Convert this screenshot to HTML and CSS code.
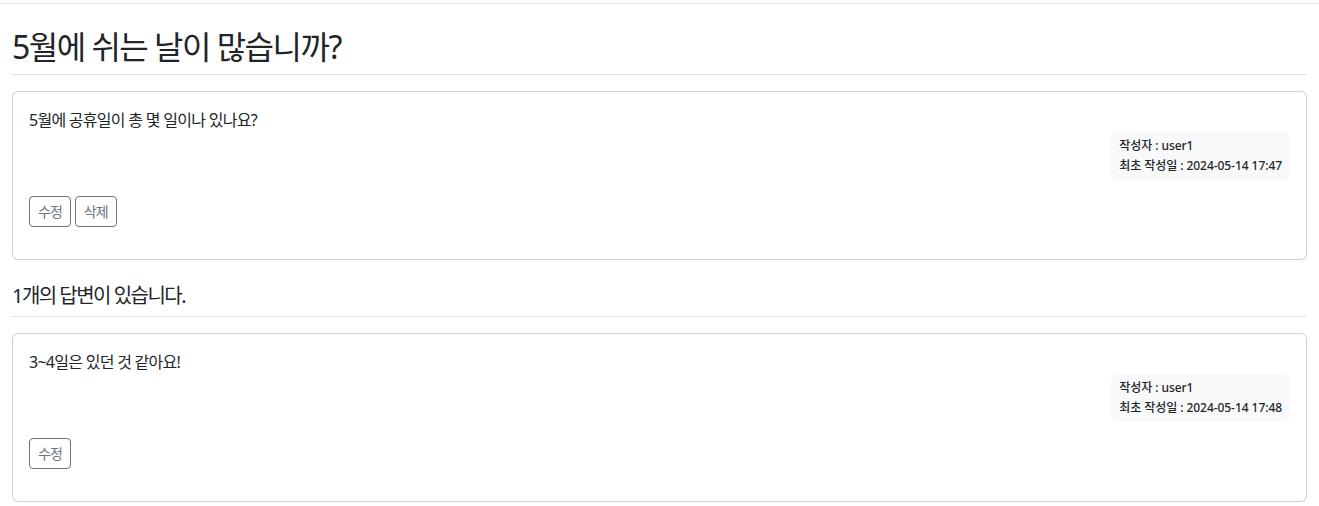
FILE: index.html
```html
<!DOCTYPE html>
<html lang="ko">
<head>
<meta charset="utf-8">
<title>5월에 쉬는 날이 많습니까?</title>
<link rel="stylesheet" href="styles.css">
</head>
<body>
<div class="topline"></div>
<div class="container">
  <h2 class="title">5월에 쉬는 날이 많습니까?</h2>
  <div class="card">
    <div class="card-body">
      <div class="card-text">5월에 공휴일이 총 몇 일이나 있나요?</div>
      <div class="meta-row">
        <div class="badge">
          <div class="badge-line">작성자 : user1</div>
          <div>최초 작성일 : 2024-05-14 17:47</div>
        </div>
      </div>
      <div class="actions">
        <a class="btn" href="#">수정</a>
        <a class="btn" href="#">삭제</a>
      </div>
    </div>
  </div>
  <h5 class="subtitle">1개의 답변이 있습니다.</h5>
  <div class="card">
    <div class="card-body">
      <div class="card-text">3~4일은 있던 것 같아요!</div>
      <div class="meta-row">
        <div class="badge">
          <div class="badge-line">작성자 : user1</div>
          <div>최초 작성일 : 2024-05-14 17:48</div>
        </div>
      </div>
      <div class="actions">
        <a class="btn" href="#">수정</a>
      </div>
    </div>
  </div>
</div>
</body>
</html>
```
FILE: styles.css
```css
* { box-sizing: border-box; }
html, body { margin: 0; padding: 0; }
body {
  font-family: "Noto Sans", "Noto Sans CJK KR", sans-serif;
  font-size: 16px;
  line-height: 1.5;
  color: #212529;
  background: #fff;
  letter-spacing: -0.095em;
}
.topline {
  height: 4px;
  border-bottom: 1px solid #e6e8eb;
}
.container {
  margin: 16px 0;
  padding: 0 12px;
}
.title {
  margin: 16px 0;
  padding: 8px 0;
  font-size: 32px;
  font-weight: 400;
  line-height: 1.2;
  border-bottom: 1px solid #dee2e6;
}
.subtitle {
  margin: 16px 0;
  padding: 8px 0;
  font-size: 20px;
  font-weight: 400;
  line-height: 1.2;
  border-bottom: 1px solid #dee2e6;
}
.card {
  margin: 16px 0;
  border: 1px solid rgba(0, 0, 0, 0.175);
  border-radius: 6px;
  background: #fff;
}
.card-body {
  padding: 16px;
}
.card-text {
  white-space: pre-line;
  font-size: 16px;
  line-height: 24px;
  letter-spacing: -0.045em;
}
.meta-row {
  display: flex;
  justify-content: flex-end;
}
.badge {
  background: #f8f9fa;
  color: #212529;
  border-radius: 6px;
  padding: 8px;
  font-size: 12px;
  line-height: 12px;
  font-weight: 500;
  white-space: nowrap;
  letter-spacing: -0.005em;
}
.badge-line {
  margin-bottom: 8px;
}
.actions {
  margin: 16px 0;
  display: flex;
  gap: 4px;
}
.btn {
  display: inline-block;
  padding: 4px 8px;
  font-size: 14px;
  line-height: 21px;
  color: #6c757d;
  border: 1px solid #6c757d;
  border-radius: 4px;
  text-decoration: none;
  background: transparent;
  letter-spacing: -0.07em;
}
```
